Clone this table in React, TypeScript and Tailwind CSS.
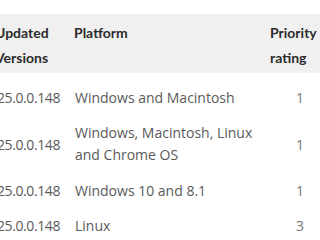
const rows = [
  { version: "25.0.0.148", platform: ["Windows and Macintosh"], rating: "1" },
  {
    version: "25.0.0.148",
    platform: ["Windows, Macintosh, Linux", "and Chrome OS"],
    rating: "1",
  },
  { version: "25.0.0.148", platform: ["Windows 10 and 8.1"], rating: "1" },
  { version: "25.0.0.148", platform: ["Linux"], rating: "3" },
];

export default function App() {
  return (
    <div className="h-[240px] w-[320px] overflow-hidden bg-white font-['Open_Sans',sans-serif]">
      <div className="mt-[14px] grid grid-cols-[75px_195px_50px] bg-[#f0f0f0] pb-[3px] pt-[6px] font-['Lato',sans-serif] text-[14px] font-bold leading-[25px] text-[#2c2c2c]">
        <div className="ml-[-5px]">
          Updated
          <br />
          Versions
        </div>
        <div className="ml-[-1px]">Platform</div>
        <div>
          Priority
          <br />
          rating
        </div>
      </div>
      <div className="pt-[7px] text-[14px] leading-[21px] text-[#5a5a5a]">
        {rows.map((r, i) => (
          <div
            key={i}
            className="grid grid-cols-[75px_195px_50px] items-center py-[7px]"
          >
            <div className="ml-[-3px] tracking-[-0.4px]">{r.version}</div>
            <div className={r.platform.length > 1 ? "leading-[22px]" : ""}>
              {r.platform.map((p) => (
                <div key={p}>{p}</div>
              ))}
            </div>
            <div className="pl-[26px] text-[#777777]">{r.rating}</div>
          </div>
        ))}
      </div>
    </div>
  );
}
